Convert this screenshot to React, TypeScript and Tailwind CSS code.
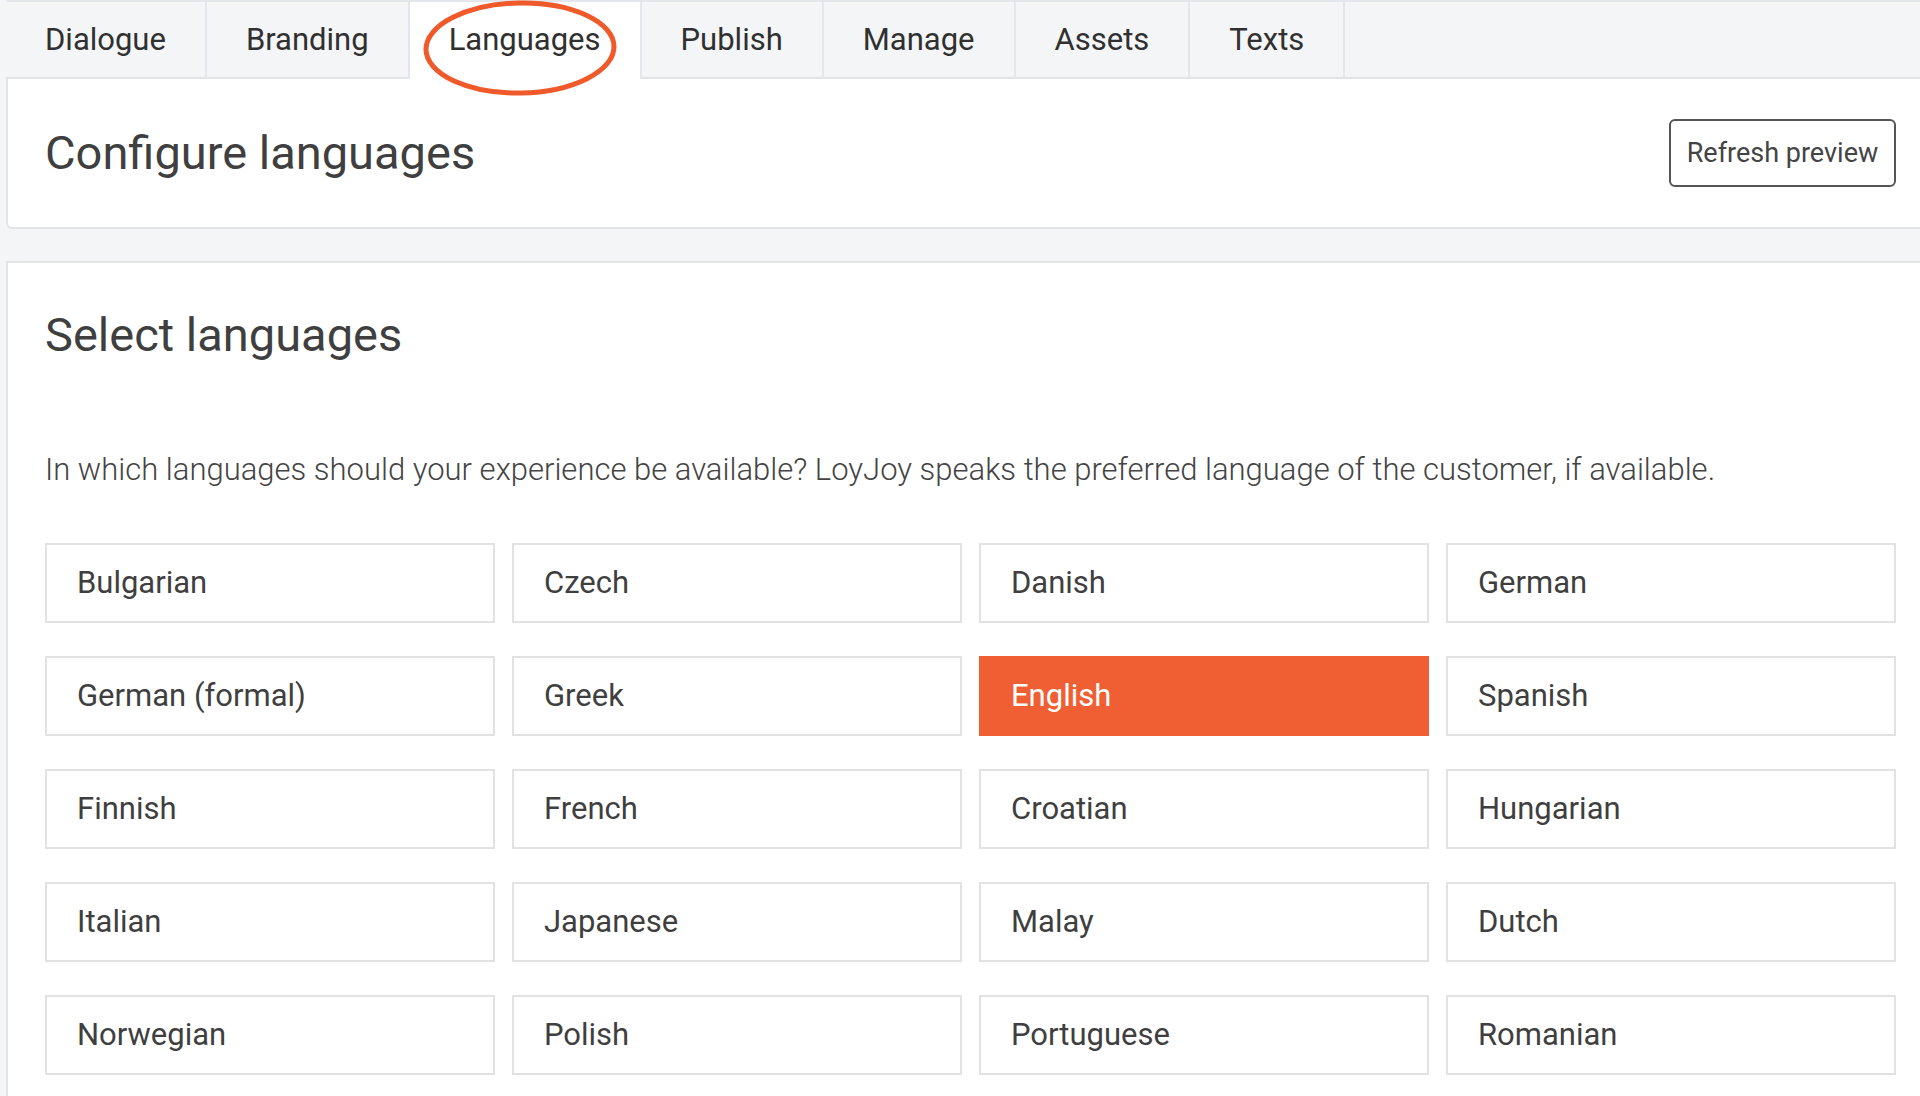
import React from 'react';

const tabs = ['Dialogue', 'Branding', 'Languages', 'Publish', 'Manage', 'Assets', 'Texts'];

const languages = [
  'Bulgarian', 'Czech', 'Danish', 'German',
  'German (formal)', 'Greek', 'English', 'Spanish',
  'Finnish', 'French', 'Croatian', 'Hungarian',
  'Italian', 'Japanese', 'Malay', 'Dutch',
  'Norwegian', 'Polish', 'Portuguese', 'Romanian',
];

const App = () => {
  return (
    <div className="min-h-screen bg-[#f4f5f7] pl-[6px] font-['Roboto',sans-serif] text-[#3f3f3f] overflow-hidden">
      {/* Tab bar */}
      <div className="relative flex h-[79px] border-t-2 border-[#e3e6ea]">
        <div className="absolute inset-x-0 bottom-0 h-[2px] bg-[#e0e3e8]" />
        {tabs.map((tab) => {
          const active = tab === 'Languages';
          return (
            <div
              key={tab}
              className={
                active
                  ? 'relative z-10 flex items-center px-[39px] bg-white text-[31px] text-[#303030] border-r-2 border-[#e3e6ea]'
                  : 'relative flex items-center px-[39px] text-[31px] text-[#303030] border-r-2 border-[#e3e6ea]'
              }
            >
              {tab}
            </div>
          );
        })}
        {/* Highlight circle */}
        <svg className="absolute left-[409px] top-[-6px] z-20" width="210" height="104" viewBox="0 0 210 104">
          <ellipse cx="105" cy="52" rx="94" ry="45" fill="none" stroke="#f05a2b" strokeWidth="5" transform="rotate(-1 105 52)" />
        </svg>
      </div>

      {/* Header card */}
      <div className="flex h-[150px] items-center justify-between bg-white border-l-2 border-b-2 border-[#e4e4e4] rounded-bl-md pl-[37px] pr-[24px]">
        <h1 className="text-[47px] leading-[54px] font-normal">Configure languages</h1>
        <button className="h-[68px] w-[227px] rounded-md border-2 border-[#555] text-[27px] text-[#444]">
          Refresh preview
        </button>
      </div>

      {/* Languages card */}
      <div className="mt-[32px] bg-white border-l-2 border-t-2 border-[#e4e4e4] pl-[37px] pr-[24px] pt-[45px] pb-[40px]">
        <h2 className="text-[47px] leading-[54px] font-normal">Select languages</h2>
        <p className="mt-[90px] text-[31px] leading-[36px] font-light text-[#444]">
          In which languages should your experience be available? LoyJoy speaks the preferred language of the customer, if available.
        </p>
        <div className="mt-[55px] grid grid-cols-4 gap-x-[17px] gap-y-[33px]">
          {languages.map((lang) => {
            const selected = lang === 'English';
            return (
              <div
                key={lang}
                className={
                  selected
                    ? 'flex h-[80px] items-center border-2 border-[#f05f33] bg-[#f05f33] px-[30px] text-[31px] text-white'
                    : 'flex h-[80px] items-center border-2 border-[#e2e2e2] bg-white px-[30px] text-[31px] text-[#3f3f3f]'
                }
              >
                {lang}
              </div>
            );
          })}
        </div>
      </div>
    </div>
  );
};

export default App;
